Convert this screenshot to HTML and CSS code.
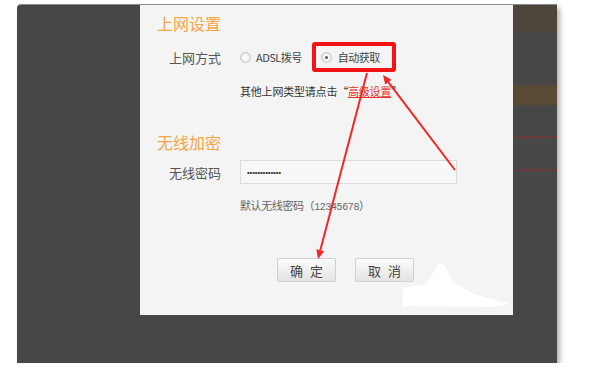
FILE: index.html
```html
<!DOCTYPE html>
<html>
	<head>
		<meta charset="UTF-8">
		<title>上网设置</title>
		<link rel="stylesheet" href="styles.css">
	</head>
	<body>
		<div class="frame">
			<div class="side"></div>
			<div class="dialog">
				<h2 class="title">上网设置</h2>
				<div class="row">
					<span class="label">上网方式</span>
					<label class="opt"><i class="radio"></i>ADSL拨号</label>
					<label class="opt on"><i class="radio"></i>自动获取</label>
				</div>
				<p class="hint">其他上网类型请点击“<a href="#">高级设置</a>”</p>

				<h2 class="title second">无线加密</h2>
				<div class="row pw">
					<span class="label">无线密码</span>
					<div class="input"><span class="dots">•••••••••••••</span></div>
				</div>
				<p class="note">默认无线密码（<span class="num">12345678</span>）</p>

				<div class="btns">
					<button class="btn">确定</button>
					<button class="btn">取消</button>
				</div>

				<!-- 标注箭头 -->
				<svg class="marks" width="373" height="311" viewBox="0 0 373 311">
					<path d="M262,301 L263,283 L286,279 L299,258 L306,262 L312,277 L334,289 L370,299 L352,302 Z" fill="#fff"/>
					<line x1="227" y1="68" x2="180.3" y2="245.3" stroke="#f32525" stroke-width="2"/>
					<polygon points="178,254 184.2,246.3 176.4,244.3" fill="#f32525"/>
					<line x1="315" y1="165" x2="248.4" y2="77.2" stroke="#f32525" stroke-width="2"/>
					<polygon points="243,70 251.6,74.8 245.2,79.6" fill="#f32525"/>
				</svg>
			</div>
			<div class="strip">
				<div class="band"></div>
				<div class="band gold"></div>
				<div class="rule"></div>
				<div class="rule"></div>
			</div>
		</div>
	</body>
</html>
```

FILE: styles.css
```css
*{
	margin: 0;
	padding: 0;
}
body{
	background: #fff;
	font-family: "Noto Sans CJK SC", "Liberation Sans", sans-serif;
}
.frame{
	display: flex;
	width: 540px;
	height: 359px;
	margin: 4px 0 0 17px;
	background: #474747;
	border-top: 1px solid #8c8c8c;
	border-top-left-radius: 4px;
	box-sizing: border-box;
	box-shadow: 3px 4px 5px rgba(0,0,0,.3);
}
.side{
	width: 123px;
}
.dialog{
	position: relative;
	width: 373px;
	height: 310px;
	background: #f4f4f4;
	padding-top: 8px;
	box-sizing: border-box;
}
.title{
	margin-left: 17px;
	font-size: 16px;
	line-height: 20px;
	font-weight: normal;
	color: #f6a548;
}
.title.second{
	margin-top: 33px;
}
.row{
	display: flex;
	align-items: center;
	height: 30px;
	margin-top: 9px;
}
.label{
	width: 81px;
	margin-right: 19px;
	text-align: right;
	font-size: 13px;
	color: #555;
}
.opt{
	display: flex;
	align-items: center;
	font-size: 11px;
	color: #444;
	letter-spacing: -0.5px;
}
.opt .radio{
	width: 9px;
	height: 9px;
	margin-right: 5px;
	border: 1px solid #c4c4c4;
	border-radius: 50%;
	background: radial-gradient(circle, #fafafa 30%, #dcdcdc 100%);
	position: relative;
}
.opt.on{
	margin-left: 10px;
	height: 22px;
	padding: 0 12px 0 5px;
	border: 4px solid #f21414;
	border-radius: 3px;
}
.opt.on .radio{
	margin-right: 6px;
}
.opt.on .radio:after{
	content: "";
	position: absolute;
	left: 3px;
	top: 3px;
	width: 3px;
	height: 3px;
	border-radius: 50%;
	background: #555;
}
.hint{
	margin-top: 11px;
	padding-left: 100px;
	font-size: 11px;
	line-height: 16px;
	color: #333;
	letter-spacing: -0.2px;
}
.hint a{
	color: #e8302a;
	text-decoration: underline;
}
.row.pw{
	height: 24px;
	margin-top: 8px;
}
.input{
	width: 217px;
	height: 24px;
	border: 1px solid #dcdcdc;
	background: #f8f8f8;
	box-sizing: border-box;
	display: flex;
	align-items: center;
	padding-left: 6px;
}
.dots{
	font-family: "Liberation Sans", sans-serif;
	font-size: 8px;
	color: #333;
	letter-spacing: -0.2px;
}
.note{
	margin-top: 13px;
	padding-left: 100px;
	font-size: 11px;
	line-height: 16px;
	color: #666;
	letter-spacing: -0.4px;
}
.note .num{
	font-family: "Liberation Mono", monospace;
	font-size: 10px;
	letter-spacing: -0.4px;
}
.btns{
	display: flex;
	gap: 19px;
	margin-top: 42px;
	padding-left: 137px;
}
.btn{
	width: 59px;
	height: 24px;
	border: 1px solid #d0d0d0;
	border-radius: 2px;
	background: linear-gradient(#fbfbfb, #e4e4e4);
	font-family: "Noto Sans CJK SC", sans-serif;
	font-size: 13px;
	color: #444;
	letter-spacing: 7px;
	text-indent: 7px;
}
.marks{
	position: absolute;
	left: 0;
	top: 0;
	overflow: visible;
}
.strip{
	width: 44px;
	display: flex;
	flex-direction: column;
}
.band{
	height: 26px;
	margin-top: 1px;
	background: #4f463b;
}
.band.gold{
	height: 20px;
	margin-top: 53px;
	background: #594a36;
}
.rule{
	height: 2px;
	margin-top: 31px;
	background: #693b3d;
}
```
